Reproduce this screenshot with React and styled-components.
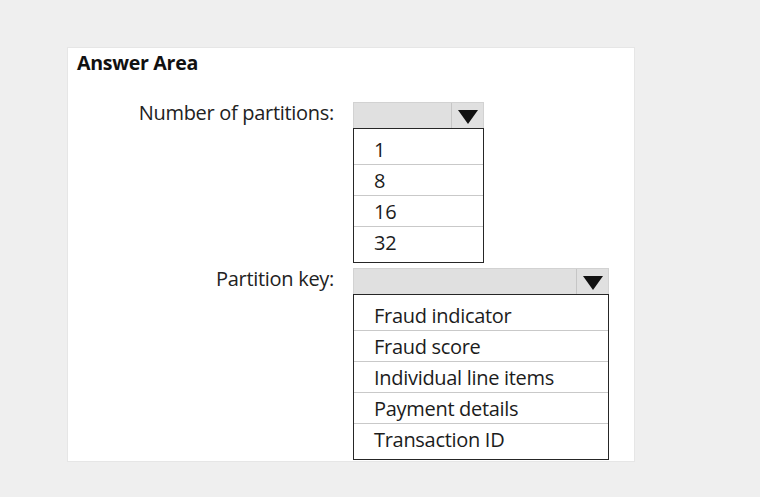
import React from 'react';
import styled, { createGlobalStyle } from 'styled-components';

const GlobalStyle = createGlobalStyle`
    html, body {
        margin: 0;
        padding: 0;
        background: #efefef;
    }
    body {
        font-family: "Open Sans", "Noto Sans", "Liberation Sans", sans-serif;
        color: #1c1c1c;
    }
`;

// 바깥 여백을 두고 흰 패널을 놓는다
const Page = styled.div`
    padding: 47px 0 0 67px;
    height: 497px;
    box-sizing: border-box;
`;

const Panel = styled.div`
    width: 568px;
    height: 415px;
    box-sizing: border-box;
    background: #ffffff;
    border: 1px solid #e6e6e6;
    padding: 2px 0 0 9px;
`;

const Title = styled.h2`
    margin: 0;
    font-size: 19.6px;
    font-weight: 700;
    line-height: 26px;
    color: #111;
    letter-spacing: -0.3px;
`;

const Form = styled.div`
    display: grid;
    grid-template-columns: 257px auto;
    column-gap: 19px;
    row-gap: 5px;
    margin-top: 26px;
    align-items: start;
`;

const Label = styled.div`
    text-align: right;
    font-size: 20px;
    line-height: 22px;
    color: #222;
    letter-spacing: -0.3px;
`;

// 드롭다운 상자
const Dropdown = styled.div`
    width: ${(p) => p.width}px;
    display: flex;
    flex-direction: column;
`;

const SelectBar = styled.div`
    height: 26px;
    box-sizing: border-box;
    display: flex;
    background: #e0e0e0;
    border: 1px solid #d2d2d2;
    border-bottom: none;
`;

const SelectValue = styled.div`
    flex: 1;
`;

const ArrowButton = styled.div`
    width: 31px;
    display: flex;
    align-items: center;
    justify-content: center;
    border-left: 1px solid #c6c6c6;
    padding-top: 2px;
`;

const Options = styled.ul`
    list-style: none;
    margin: 0;
    padding: 5px 0 4px;
    border: 1px solid #262626;
`;

const Option = styled.li`
    height: 31px;
    box-sizing: border-box;
    padding-left: 20px;
    display: flex;
    align-items: center;
    font-size: 20px;
    color: #1c1c1c;
    letter-spacing: -0.3px;
    border-bottom: 1px solid #c9c9c9;

    &:last-child {
        border-bottom: none;
    }
`;

function Arrow() {
    return (
        <svg width="20" height="14" viewBox="0 0 20 14">
            <polygon points="0,0 20,0 10,14" fill="#111" />
        </svg>
    );
}

function Select({ width, items }) {
    return (
        <Dropdown width={width}>
            <SelectBar>
                <SelectValue />
                <ArrowButton>
                    <Arrow />
                </ArrowButton>
            </SelectBar>
            <Options>
                {items.map((item) => (
                    <Option key={item}>{item}</Option>
                ))}
            </Options>
        </Dropdown>
    );
}

export default function App() {
    return (
        <>
            <GlobalStyle />
            <Page>
                <Panel>
                    <Title>Answer Area</Title>
                    <Form>
                        <Label>Number of partitions:</Label>
                        <Select width={131} items={['1', '8', '16', '32']} />
                        <Label>Partition key:</Label>
                        <Select
                            width={256}
                            items={[
                                'Fraud indicator',
                                'Fraud score',
                                'Individual line items',
                                'Payment details',
                                'Transaction ID',
                            ]}
                        />
                    </Form>
                </Panel>
            </Page>
        </>
    );
}
